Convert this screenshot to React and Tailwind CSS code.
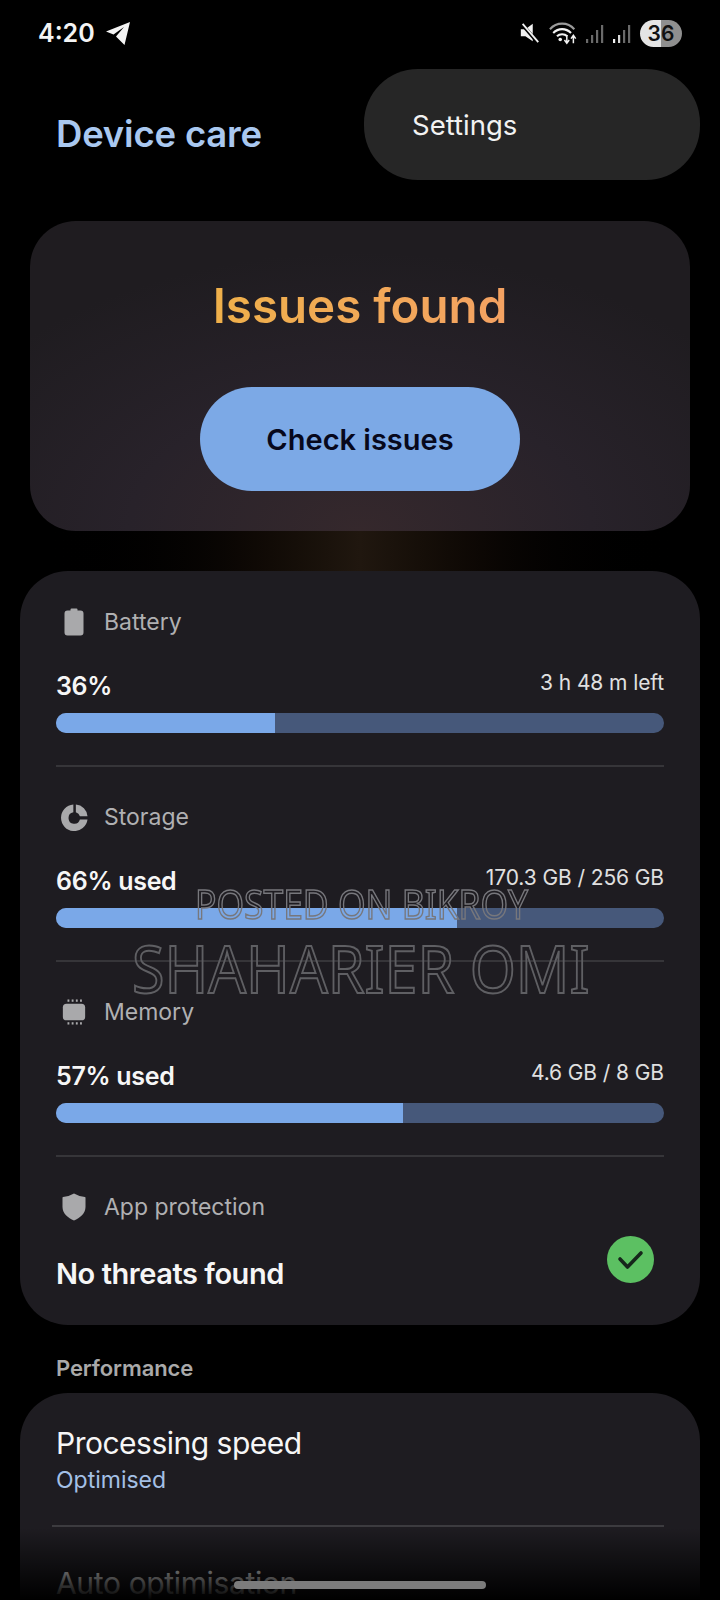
const ROWS = [
  { label: 'Battery', value: '36%', detail: '3 h 48 m left', fill: 'w-[36%]', icon: <BatteryIcon /> },
  { label: 'Storage', value: '66% used', detail: '170.3 GB / 256 GB', fill: 'w-[66%]', icon: <StorageIcon /> },
  { label: 'Memory', value: '57% used', detail: '4.6 GB / 8 GB', fill: 'w-[57%]', icon: <MemoryIcon /> },
]

export default function App() {
  return (
    <div className="relative h-[1600px] w-[720px] overflow-hidden bg-black text-white [font-family:Inter,sans-serif]">
      <StatusBar />

      {/* Title */}
      <div className="h-[155px] pl-[56px] pt-[48px]">
        <h1 className="text-[36.5px] leading-[40px] font-semibold tracking-[-0.2px] text-[#a9c8f0]">Device care</h1>
      </div>

      {/* Summary card */}
      <section className="mx-[30px] flex h-[310px] flex-col items-center rounded-[46px] bg-[radial-gradient(ellipse_70%_90%_at_50%_100%,#35282c_0%,#28222a_50%,#1f1c20_100%)] pt-[57px]">
        <h2 className="bg-linear-to-r from-[#efb04a] to-[#f4a262] bg-clip-text text-[47.5px] leading-[56px] font-semibold text-transparent">
          Issues found
        </h2>
        <button className="mt-[53px] h-[104px] w-[320px] rounded-full bg-[#7ca9e6] pt-[1px] text-[29px] font-semibold text-[#07081c]">
          Check issues
        </button>
      </section>
      <div className="mx-[30px] h-[40px] bg-linear-to-r from-black via-[#20170f] to-black" />

      {/* Status card */}
      <section className="mx-[20px] rounded-[48px] bg-[#1e1c21] px-[36px] pt-[36px] pb-[32px]">
        {ROWS.map((row) => (
          <div key={row.label} className="pb-[35px]">
            <RowHeader icon={row.icon} label={row.label} />
            <div className="mt-[33px] flex items-start justify-between">
              <span className="pt-[1px] text-[25px] leading-[30px] font-semibold tracking-[-0.3px] text-[#f6f6f6]">{row.value}</span>
              <span className="text-[21px] leading-[26px] tracking-[-0.1px] text-[#e0e0e0]">{row.detail}</span>
            </div>
            <div className="mt-[12px] h-[20px] overflow-hidden rounded-full bg-[#46587a]">
              <div className={`h-full bg-[#7aa8e8] ${row.fill}`} />
            </div>
            <div className="mt-[32px] h-[2px] bg-[#363539]" />
          </div>
        ))}
        <RowHeader icon={<ShieldIcon />} label="App protection" />
        <div className="mt-[14px] flex items-start justify-between">
          <span className="mt-[19px] text-[29px] leading-[38px] font-semibold tracking-[-0.45px] text-[#f6f6f6]">No threats found</span>
          <CheckBadge />
        </div>
      </section>

      {/* Performance */}
      <p className="mt-[28px] pl-[56px] text-[22px] leading-[30px] font-semibold tracking-[-0.1px] text-[#a9a9a9]">Performance</p>
      <section className="mx-[20px] mt-[10px] h-[300px] rounded-[48px] bg-[#1e1c21] px-[36px] pt-[31px]">
        <p className="text-[30px] leading-[38px] tracking-[-0.5px] text-[#f6f6f6]">Processing speed</p>
        <p className="mt-[3px] text-[23px] leading-[30px] text-[#a4c0e6]">Optimised</p>
        <div className="mt-[30px] -ml-[4px] h-[2px] bg-[#3c3b3f]" />
        <p className="mt-[37px] text-[30px] leading-[38px] tracking-[-0.35px] text-[#f6f6f6]">Auto optimisation</p>
      </section>

      {/* Bottom fade and gesture bar */}
      <div className="absolute inset-x-0 bottom-0 h-[72px] bg-linear-to-b from-transparent to-black" />
      <div className="absolute bottom-[11px] left-[234px] h-[8px] w-[252px] rounded-full bg-[#7c7c7c]" />

      {/* Watermark */}
      <div className="absolute top-[881px] left-[195px] origin-left scale-x-[0.885] text-[40px] leading-[46px] whitespace-nowrap text-transparent [-webkit-text-stroke:1.5px_#77777c] [font-family:'Noto_Sans',sans-serif]">
        POSTED ON BIKROY
      </div>
      <div className="absolute top-[930px] left-[132px] origin-left scale-x-[0.91] text-[65px] leading-[76px] whitespace-nowrap text-transparent [-webkit-text-stroke:2px_#5f5f63] [font-family:'Noto_Sans',sans-serif]">
        SHAHARIER OMI
      </div>

      {/* Overflow menu */}
      <div className="absolute top-[69px] left-[364px] flex h-[111px] w-[336px] items-start rounded-[54px] bg-[#262626] pt-[39px] pl-[48px]">
        <span className="text-[27.5px] leading-[34px] text-[#f2f2f2]">Settings</span>
      </div>
    </div>
  )
}

function RowHeader({ icon, label }) {
  return (
    <div className="flex h-[30px] items-center">
      <span className="flex w-[36px] items-center justify-center">{icon}</span>
      <span className="ml-[12px] text-[23px] leading-[30px] text-[#b0b0b2]">{label}</span>
    </div>
  )
}

function StatusBar() {
  return (
    <div className="flex h-[66px] items-center justify-between pr-[38px] pl-[38px]">
      <div className="flex items-center gap-[10px]">
        <span className="text-[25px] leading-[30px] font-semibold text-[#f4f4f4]">4:20</span>
        <svg width="26" height="26" viewBox="0 0 26 26" className="-mt-px">
          <path d="M25 2 L1 11.5 L8.5 14.5 L19 7 L11 16.5 L19.5 25 Z" fill="#f4f4f4" />
        </svg>
      </div>
      <div className="flex items-center">
        {/* muted speaker */}
        <svg width="22" height="24" viewBox="0 0 24 24" className="mr-[8px]">
          <path d="M2 8 H7 L15 2 V21 L7 15.5 H2 Z" fill="#f2f2f2" />
          <path d="M3 2 L21 23" stroke="#000" strokeWidth="4" />
          <path d="M4 2 L21 22" stroke="#f2f2f2" strokeWidth="2" />
        </svg>
        {/* wifi with arrows */}
        <svg width="30" height="26" viewBox="0 0 32 26" className="mr-[7px]">
          <path d="M1 9 C8 1 20 1 27 9" stroke="#9a9a9a" strokeWidth="2.2" fill="none" />
          <path d="M4.5 13 C10 7.5 18 7.5 23.5 13" stroke="#f2f2f2" strokeWidth="2.2" fill="none" />
          <path d="M8.5 16.5 C11.5 13.5 16.5 13.5 19.5 16.5" stroke="#f2f2f2" strokeWidth="2.2" fill="none" />
          <circle cx="12" cy="20" r="1.9" fill="#f2f2f2" />
          <path d="M19 15 V23 M16.5 20.5 L19 24 L21.5 20.5" stroke="#f2f2f2" strokeWidth="1.6" fill="none" />
          <path d="M26 24 V16 M23.5 19 L26 15.5 L28.5 19" stroke="#f2f2f2" strokeWidth="1.6" fill="none" />
        </svg>
        {/* sim signal */}
        <svg width="18" height="24" viewBox="0 0 18 24" className="mr-[9px]">
          <rect x="0" y="18" width="2.2" height="4" fill="#6a6a6a" />
          <rect x="5" y="14" width="2.2" height="8" fill="#6a6a6a" />
          <rect x="10" y="9" width="2.2" height="13" fill="#6a6a6a" />
          <rect x="15" y="4" width="2.2" height="18" fill="#6a6a6a" />
        </svg>
        <svg width="18" height="24" viewBox="0 0 18 24" className="mr-[9px]">
          <rect x="0" y="18" width="2.2" height="4" fill="#f2f2f2" />
          <rect x="5" y="14" width="2.2" height="8" fill="#dadada" />
          <rect x="10" y="9" width="2.2" height="13" fill="#6a6a6a" />
          <rect x="15" y="4" width="2.2" height="18" fill="#6a6a6a" />
        </svg>
        {/* battery pill, filled to the level */}
        <div className="flex h-[27px] w-[42px] items-center justify-center rounded-full bg-linear-to-r from-[#e4e4e4] from-50% to-[#8f8f8f] to-50% text-[21px] leading-none font-semibold text-[#111]">
          36
        </div>
      </div>
    </div>
  )
}

function BatteryIcon() {
  return (
    <svg width="20" height="28" viewBox="0 0 20 28">
      <path d="M6.5 1.5 Q6.5 0.5 7.5 0.5 H12.5 Q13.5 0.5 13.5 1.5 V2.5 H16.5 Q19.5 2.5 19.5 5.5 V24.5 Q19.5 27.5 16.5 27.5 H3.5 Q0.5 27.5 0.5 24.5 V5.5 Q0.5 2.5 3.5 2.5 H6.5 Z" fill="#a9a9ab" />
    </svg>
  )
}

function StorageIcon() {
  return (
    <svg width="27" height="27" viewBox="0 0 28 28">
      <path d="M12.8 0.5 V8.6 A6 6 0 1 0 19.6 16.1 H27.5 A13.8 13.8 0 1 1 12.8 0.5 Z" fill="#a9a9ab" />
      <path d="M15.4 0.5 A13 13 0 0 1 27.5 12.7 H19.6 A6 6 0 0 0 15.4 8.6 Z" fill="#a9a9ab" />
    </svg>
  )
}

function MemoryIcon() {
  const pins = [7, 11.5, 16, 20.5]
  return (
    <svg width="26" height="28" viewBox="0 0 28 28">
      <rect x="2" y="5" width="24" height="18" rx="4" fill="#a9a9ab" />
      {pins.map((x) => (
        <g key={x} fill="#a9a9ab">
          <rect x={x} y="0.5" width="2" height="2.5" />
          <rect x={x} y="25" width="2" height="2.5" />
        </g>
      ))}
    </svg>
  )
}

function ShieldIcon() {
  return (
    <svg width="24" height="28" viewBox="0 0 24 28">
      <path d="M12 0.5 Q17 3.5 23 4 Q23.5 4 23.5 5 V14 C23.5 20.5 18 25 12 27.5 C6 25 0.5 20.5 0.5 14 V5 Q0.5 4 1 4 Q7 3.5 12 0.5 Z" fill="#a9a9ab" />
    </svg>
  )
}

function CheckBadge() {
  return (
    <svg width="47" height="47" viewBox="0 0 47 47" className="mr-[10px]">
      <circle cx="23.5" cy="23.5" r="23.5" fill="#5cc062" />
      <path d="M13 23 L20.5 31 L34 17" stroke="#16261b" strokeWidth="3.6" fill="none" strokeLinecap="round" strokeLinejoin="round" />
    </svg>
  )
}
